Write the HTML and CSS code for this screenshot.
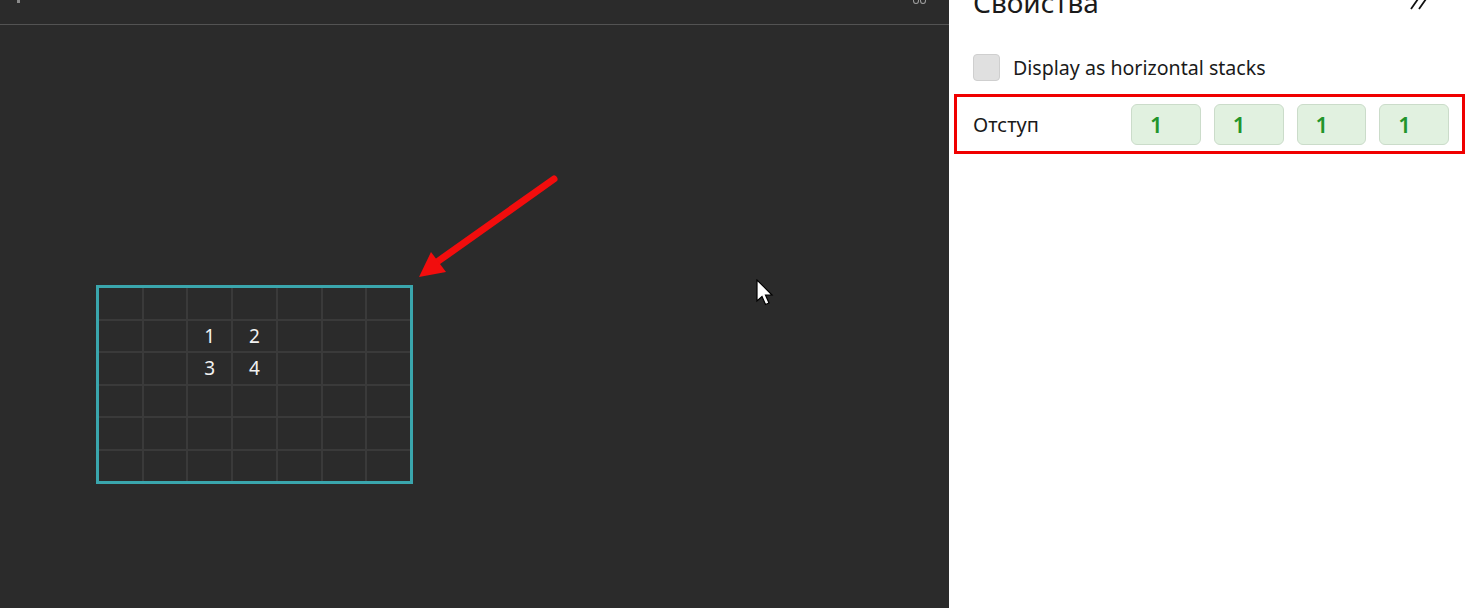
FILE: index.html
```html
<!DOCTYPE html>
<html lang="ru">
<head>
<meta charset="utf-8">
<title>Свойства</title>
<link rel="stylesheet" href="styles.css">
</head>
<body>
<div class="app">
  <section class="canvas">
    <div class="topbar">
      <span class="tb-left"></span>
      <span class="tb-right"><i></i><i></i></span>
    </div>
    <div class="stage">
      <div class="gridbox">
        <div class="cell"></div><div class="cell"></div><div class="cell"></div><div class="cell"></div><div class="cell"></div><div class="cell"></div><div class="cell"></div>
        <div class="cell"></div><div class="cell"></div><div class="cell">1</div><div class="cell">2</div><div class="cell"></div><div class="cell"></div><div class="cell"></div>
        <div class="cell"></div><div class="cell"></div><div class="cell">3</div><div class="cell">4</div><div class="cell"></div><div class="cell"></div><div class="cell"></div>
        <div class="cell"></div><div class="cell"></div><div class="cell"></div><div class="cell"></div><div class="cell"></div><div class="cell"></div><div class="cell"></div>
        <div class="cell"></div><div class="cell"></div><div class="cell"></div><div class="cell"></div><div class="cell"></div><div class="cell"></div><div class="cell"></div>
        <div class="cell"></div><div class="cell"></div><div class="cell"></div><div class="cell"></div><div class="cell"></div><div class="cell"></div><div class="cell"></div>
      </div>
      <svg class="arrow" width="949" height="608" viewBox="0 0 949 608">
        <line x1="554" y1="179" x2="437" y2="262" stroke="#f20d0d" stroke-width="7" stroke-linecap="round"/>
        <polygon points="419,277 431,252 446,272" fill="#f20d0d"/>
      </svg>
      <svg class="cursor" width="20" height="28" viewBox="0 0 20 28">
        <path d="M1 1 L1 22 L6 17.5 L9.5 25.5 L13 24 L9.5 16 L16 16 Z" fill="#fff" stroke="#000" stroke-width="1.2" stroke-linejoin="miter"/>
      </svg>
    </div>
  </section>
  <aside class="panel">
    <div class="panel-head">
      <h1 class="title">Свойства</h1>
      <svg class="collapse" width="20" height="14" viewBox="0 0 20 14">
        <path d="M3 -9 L10 -1 L3 9 M11 -9 L18 -1 L11 9" fill="none" stroke="#111" stroke-width="1.8"/>
      </svg>
    </div>
    <label class="check-row">
      <span class="checkbox"></span>
      <span class="check-label">Display as horizontal stacks</span>
    </label>
    <div class="prop-row">
      <span class="prop-label">Отступ</span>
      <div class="inputs">
        <span class="num">1</span>
        <span class="num">1</span>
        <span class="num">1</span>
        <span class="num">1</span>
      </div>
    </div>
  </aside>
</div>
</body>
</html>
```
FILE: styles.css
```css
* { box-sizing: border-box; }
html, body { margin: 0; padding: 0; }
body {
  width: 1467px;
  height: 608px;
  overflow: hidden;
  font-family: "Noto Sans", "Open Sans", sans-serif;
  background: #2b2b2b;
}
.app {
  display: flex;
  height: 608px;
}
.canvas {
  width: 949px;
  flex: none;
  background: #2b2b2b;
  display: flex;
  flex-direction: column;
  position: relative;
}
.topbar {
  height: 25px;
  border-bottom: 1px solid #535353;
  display: flex;
  justify-content: space-between;
  padding: 0 23px 0 17px;
}
.tb-left {
  width: 3px;
  height: 3px;
  background: #8a8a8a;
}
.tb-right {
  display: flex;
  gap: 1px;
  margin-top: -3px;
}
.tb-right i {
  display: block;
  width: 6px;
  height: 7px;
  border: 1.5px solid #a0a0a0;
  border-radius: 50%;
}
.stage {
  flex: 1;
  position: relative;
}
.gridbox {
  position: absolute;
  left: 96px;
  top: 260px;
  width: 317px;
  height: 199px;
  border: 3px solid #3aa6ad;
  background: #3a3a3a;
  display: grid;
  grid-template-columns: repeat(7, 1fr);
  grid-template-rows: repeat(6, 1fr);
  gap: 2px;
}
.cell {
  background: #2b2b2b;
  color: #f2f2f2;
  font-size: 19px;
  font-weight: 400;
  display: flex;
  align-items: center;
  justify-content: center;
}
.arrow {
  position: absolute;
  left: 0;
  top: -25px;
  pointer-events: none;
}
.cursor {
  position: absolute;
  left: 756px;
  top: 254px;
}
.panel {
  flex: 1;
  background: #fff;
  color: #1a1a1a;
  padding: 0 2px 0 5px;
  display: flex;
  flex-direction: column;
}
.panel-head {
  display: flex;
  align-items: flex-start;
  justify-content: space-between;
  height: 40px;
  padding: 0 37px 0 19px;
}
.title {
  margin: -14px 0 0 0;
  font-size: 28px;
  font-weight: 400;
  line-height: 32px;
}
.check-row {
  display: flex;
  align-items: center;
  gap: 13px;
  padding-left: 19px;
  height: 54px;
}
.checkbox {
  width: 27px;
  height: 27px;
  background: #e0e0e0;
  border: 1px solid #cfcfcf;
  border-radius: 4px;
}
.check-label {
  font-size: 19.6px;
}
.prop-row {
  height: 60px;
  border: 3px solid #f00000;
  display: flex;
  align-items: center;
  padding: 0 13px 0 16px;
}
.prop-label {
  font-size: 20px;
  width: 158px;
}
.inputs {
  display: flex;
  gap: 13px;
  flex: 1;
}
.num {
  flex: 1;
  height: 41px;
  background: #e1f1e0;
  border: 1px solid #cbdcca;
  border-radius: 6px;
  color: #22952b;
  font-size: 22px;
  font-weight: 600;
  display: flex;
  align-items: center;
  padding-left: 18px;
}
```
